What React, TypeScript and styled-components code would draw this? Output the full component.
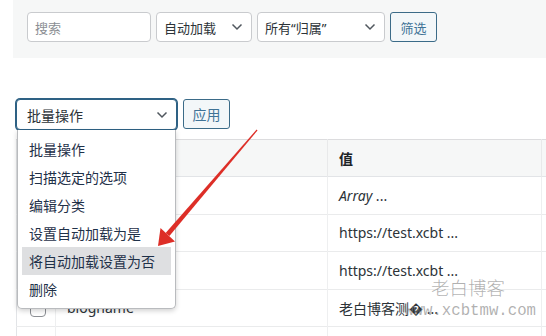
import React from 'react'
import styled, { createGlobalStyle } from 'styled-components'

const GlobalStyle = createGlobalStyle`
  html, body {
    margin: 0;
    padding: 0;
    background: #ffffff;
  }
  body {
    font-family: "Noto Sans", "Noto Sans CJK SC", sans-serif;
    color: #2c3338;
  }
`

const Page = styled.div`
  position: relative;
  width: 546px;
  height: 336px;
  overflow: hidden;
  background: #fff;
`

const FilterPanel = styled.div`
  display: flex;
  align-items: flex-start;
  gap: 5px;
  height: 58px;
  margin-left: 13px;
  padding: 12px 0 0 14px;
  box-sizing: border-box;
  background: #f6f7f7;
`

const SearchBox = styled.div`
  width: 124px;
  height: 30px;
  box-sizing: border-box;
  border: 1px solid #c9cbce;
  border-radius: 4px;
  background: #fff;
  padding-left: 7px;
  display: flex;
  align-items: center;
  font-size: 13px;
  color: #8c8f94;
`

const SelectBox = styled.div<{ $w: number; $h?: number; $focus?: boolean; $size?: number }>`
  width: ${(p) => p.$w}px;
  height: ${(p) => p.$h ?? 30}px;
  box-sizing: border-box;
  border: 1px solid ${(p) => (p.$focus ? '#2e6184' : '#c9cbce')};
  box-shadow: ${(p) => (p.$focus ? '0 0 0 1px #2e6184' : 'none')};
  border-radius: 4px;
  background: #fff;
  display: flex;
  align-items: center;
  justify-content: space-between;
  padding: 0 8px 0 ${(p) => (p.$focus ? 10 : 7)}px;
  font-size: ${(p) => p.$size ?? 13}px;
  color: #2c3338;
`

const Button = styled.div<{ $size?: number }>`
  width: 47px;
  height: 30px;
  box-sizing: border-box;
  border: 1px solid #3b6b88;
  border-radius: 3px;
  background: #f3f7f9;
  color: #3f7397;
  display: flex;
  align-items: center;
  justify-content: center;
  font-size: ${(p) => p.$size ?? 13}px;
`

const BulkBar = styled.div`
  display: flex;
  align-items: flex-start;
  gap: 6px;
  margin: 41px 0 0 16px;
`

const TableWrap = styled.div`
  margin: 9px 0 0 16px;
  width: 600px;
`

const Table = styled.table`
  border-collapse: collapse;
  table-layout: fixed;
  width: 600px;
  font-size: 14px;
  border-left: 1px solid #e2e4e7;
`

const HeadRow = styled.tr`
  height: 37px;
  background: #f6f7f7;
  border-top: 1px solid #dcdcde;
  border-bottom: 1px solid #e2e4e7;
`

const Row = styled.tr`
  height: 37.5px;
  border-bottom: 1px solid #eaebec;
`

const Th = styled.th`
  text-align: left;
  font-weight: 600;
  color: #1d2327;
  padding: 0 11px;
  border-right: 1px solid #e8e9ea;
`

const Td = styled.td`
  padding: 0 11px;
  color: #2c3338;
  white-space: nowrap;
  overflow: hidden;
  border-right: 1px solid #eeeff0;
  font-size: 14px;
`

const Check = styled.span`
  display: inline-block;
  width: 14px;
  height: 14px;
  border: 1px solid #8c8f94;
  border-radius: 4px;
  background: #fff;
  vertical-align: middle;
  margin-left: 2px;
`

const Em = styled.em`
  font-style: italic;
`

const Dropdown = styled.div`
  position: absolute;
  left: 17px;
  top: 130px;
  width: 159px;
  height: 179px;
  box-sizing: border-box;
  padding: 5px 4px;
  background: #fff;
  border: 1px solid #b9bbbe;
  border-top: none;
  border-radius: 0 0 5px 5px;
  box-shadow: 0 2px 5px rgba(0, 0, 0, 0.18);
`

const Option = styled.div<{ $active?: boolean }>`
  height: 28px;
  display: flex;
  align-items: center;
  padding-left: 7px;
  font-size: 14px;
  color: #1f3149;
  background: ${(p) => (p.$active ? '#dedfe1' : 'transparent')};
`

const Watermark = styled.div`
  position: absolute;
  left: 400px;
  top: 274px;
  color: rgba(125, 125, 125, 0.6);
  pointer-events: none;
  display: flex;
  flex-direction: column;
  align-items: flex-end;
  width: 136px;
`

const WatermarkTitle = styled.span`
  font-family: "Noto Sans CJK SC", serif;
  font-weight: 300;
  font-size: 18.5px;
  margin-right: 31px;
  line-height: 26px;
`

const WatermarkUrl = styled.span`
  font-family: "Liberation Mono", monospace;
  font-size: 15.7px;
  line-height: 22px;
`

const ArrowLayer = styled.svg`
  position: absolute;
  left: 0;
  top: 0;
  pointer-events: none;
`

function Chevron() {
  return (
    <svg width="12" height="8" viewBox="0 0 12 8">
      <path d="M1.5 1.5 L6 6 L10.5 1.5" fill="none" stroke="#50575e" strokeWidth="1.5" />
    </svg>
  )
}

const options = ['批量操作', '扫描选定的选项', '编辑分类', '设置自动加载为是', '将自动加载设置为否', '删除']

export default function App() {
  return (
    <Page>
      <GlobalStyle />
      <FilterPanel>
        <SearchBox>搜索</SearchBox>
        <SelectBox $w={96}>
          自动加载
          <Chevron />
        </SelectBox>
        <SelectBox $w={128}>
          所有“归属”
          <Chevron />
        </SelectBox>
        <Button>筛选</Button>
      </FilterPanel>

      <BulkBar>
        <SelectBox $w={161} $h={31} $focus $size={14}>
          批量操作
          <Chevron />
        </SelectBox>
        <Button $size={14}>应用</Button>
      </BulkBar>

      <TableWrap>
        <Table>
          <colgroup>
            <col style={{ width: 39 }} />
            <col style={{ width: 272 }} />
            <col style={{ width: 214 }} />
            <col />
          </colgroup>
          <thead>
            <HeadRow>
              <Th>
                <Check />
              </Th>
              <Th />
              <Th>值</Th>
              <Th />
            </HeadRow>
          </thead>
          <tbody>
            <Row>
              <Td>
                <Check />
              </Td>
              <Td />
              <Td>
                <Em>Array</Em> ...
              </Td>
              <Td />
            </Row>
            <Row>
              <Td>
                <Check />
              </Td>
              <Td />
              <Td>https://test.xcbt ...</Td>
              <Td />
            </Row>
            <Row>
              <Td>
                <Check />
              </Td>
              <Td />
              <Td>https://test.xcbt ...</Td>
              <Td />
            </Row>
            <Row>
              <Td>
                <Check />
              </Td>
              <Td>blogname</Td>
              <Td>老白博客测{'\uFFFD'} ...</Td>
              <Td />
            </Row>
            <Row>
              <Td />
              <Td />
              <Td />
              <Td />
            </Row>
          </tbody>
        </Table>
      </TableWrap>

      <Dropdown>
        {options.map((o, i) => (
          <Option key={o} $active={i === 4}>
            {o}
          </Option>
        ))}
      </Dropdown>

      <Watermark>
        <WatermarkTitle>老白博客</WatermarkTitle>
        <WatermarkUrl>www.xcbtmw.com</WatermarkUrl>
      </Watermark>

      <ArrowLayer width="546" height="336" viewBox="0 0 546 336">
        <polygon points="256.6,129.6 257.5,130.4 169.4,235.9 165.6,232.9" fill="#dd2e27" />
        <polygon points="158,246 160.5,228 175,241.5" fill="#dd2e27" />
      </ArrowLayer>
    </Page>
  )
}
